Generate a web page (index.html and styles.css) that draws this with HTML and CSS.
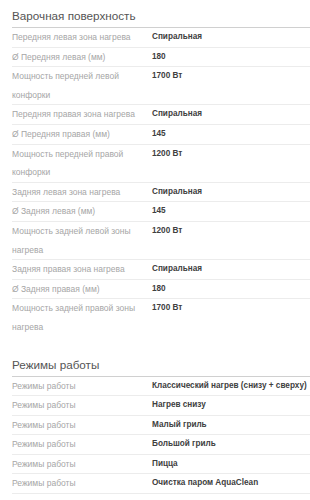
FILE: index.html
```html
<!DOCTYPE html>
<html lang="ru">
<head>
<meta charset="utf-8">
<link rel="stylesheet" href="styles.css">
</head>
<body>
<div class="specs">
  <section class="group">
    <h2 class="group-title">Варочная поверхность</h2>
    <div class="row"><div class="label">Передняя левая зона нагрева</div><div class="value">Спиральная</div></div>
    <div class="row"><div class="label">Ø Передняя левая (мм)</div><div class="value">180</div></div>
    <div class="row"><div class="label">Мощность передней левой конфорки</div><div class="value">1700 Вт</div></div>
    <div class="row"><div class="label">Передняя правая зона нагрева</div><div class="value">Спиральная</div></div>
    <div class="row"><div class="label">Ø Передняя правая (мм)</div><div class="value">145</div></div>
    <div class="row"><div class="label">Мощность передней правой конфорки</div><div class="value">1200 Вт</div></div>
    <div class="row"><div class="label">Задняя левая зона нагрева</div><div class="value">Спиральная</div></div>
    <div class="row"><div class="label">Ø Задняя левая (мм)</div><div class="value">145</div></div>
    <div class="row"><div class="label">Мощность задней левой зоны нагрева</div><div class="value">1200 Вт</div></div>
    <div class="row"><div class="label">Задняя правая зона нагрева</div><div class="value">Спиральная</div></div>
    <div class="row"><div class="label">Ø Задняя правая (мм)</div><div class="value">180</div></div>
    <div class="row last"><div class="label">Мощность задней правой зоны нагрева</div><div class="value">1700 Вт</div></div>
  </section>
  <section class="group">
    <h2 class="group-title">Режимы работы</h2>
    <div class="row"><div class="label">Режимы работы</div><div class="value">Классический нагрев (снизу + сверху)</div></div>
    <div class="row"><div class="label">Режимы работы</div><div class="value">Нагрев снизу</div></div>
    <div class="row"><div class="label">Режимы работы</div><div class="value">Малый гриль</div></div>
    <div class="row"><div class="label">Режимы работы</div><div class="value">Большой гриль</div></div>
    <div class="row"><div class="label">Режимы работы</div><div class="value">Пицца</div></div>
    <div class="row"><div class="label">Режимы работы</div><div class="value">Очистка паром AquaClean</div></div>
  </section>
</div>
</body>
</html>
```
FILE: styles.css
```css
html, body {
  margin: 0;
  padding: 0;
  background: #fff;
}
body {
  font-family: "Liberation Sans", Arial, sans-serif;
}
.specs {
  padding: 6px 0 0 12px;
}
.group {
  margin-bottom: 18px;
}
.group-title {
  margin: 0;
  font-size: 11.7px;
  font-weight: normal;
  color: #555;
  line-height: 20px;
  padding-bottom: 1px;
  border-bottom: 1px solid #d0d0d0;
}
.row {
  display: grid;
  grid-template-columns: 140px 1fr;
  border-bottom: 1px solid #ececec;
  font-size: 8.5px;
  line-height: 18.6px;
}
.row.last {
  border-bottom: none;
}
.label {
  color: #a6a6a6;
}
.value {
  color: #404040;
  font-weight: bold;
  font-size: 8.2px;
  white-space: nowrap;
}
```
